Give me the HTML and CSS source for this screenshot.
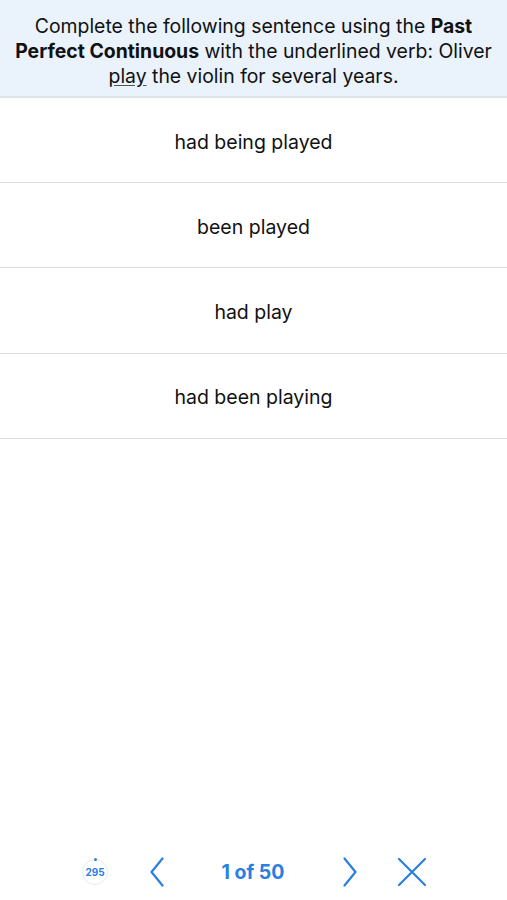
FILE: index.html
```html
<!DOCTYPE html>
<html>
<head>
<meta charset="utf-8">
<link rel="stylesheet" href="styles.css">
</head>
<body>
<div class="app">
  <div class="question">Complete the following sentence using the <b>Past</b><br><b>Perfect Continuous</b> with the underlined verb: Oliver<br><u>play</u> the violin for several years.</div>
  <div class="options">
    <div class="option">had being played</div>
    <div class="option">been played</div>
    <div class="option">had play</div>
    <div class="option">had been playing</div>
  </div>
  <div class="spacer"></div>
  <div class="toolbar">
    <div class="counter">
      <span class="dot"></span>
      <span class="num">295</span>
    </div>
    <svg class="prev" width="22" height="30" viewBox="0 0 22 30"><path d="M15.5 1.5 L4.5 15 L15.5 28.5" fill="none" stroke="#2b7fe0" stroke-width="2.2" stroke-linecap="round" stroke-linejoin="round"/></svg>
    <div class="page">1 of 50</div>
    <svg class="next" width="22" height="30" viewBox="0 0 22 30"><path d="M6.5 1.5 L17.5 15 L6.5 28.5" fill="none" stroke="#2b7fe0" stroke-width="2.2" stroke-linecap="round" stroke-linejoin="round"/></svg>
    <svg class="close" width="30" height="30" viewBox="0 0 30 30"><path d="M2 2 L28 28 M28 2 L2 28" fill="none" stroke="#2b7fe0" stroke-width="2.2" stroke-linecap="round"/></svg>
  </div>
</div>
</body>
</html>
```
FILE: styles.css
```css
html, body { margin: 0; padding: 0; background: #fff; }
body { font-family: Inter, "Noto Sans", "Liberation Sans", sans-serif; color: #111; }
.app { width: 507px; height: 900px; display: flex; flex-direction: column; }
.question {
  background: #eaf2fb;
  text-align: center;
  font-size: 19.4px;
  line-height: 25px;
  padding: 14px 0 7px;
  border-bottom: 2px solid #dfe3e8;
  white-space: nowrap;
}
.question b { font-weight: 700; }
.question u { text-decoration-color: #555; text-underline-offset: 2px; }
.options { display: flex; flex-direction: column; }
.option {
  height: 79.2px;
  padding-top: 5px;
  box-sizing: content-box;
  display: flex; align-items: center; justify-content: center;
  font-size: 19.5px;
  line-height: 1;
  border-bottom: 1.5px solid #dcdcdc;
}
.spacer { flex: 1; }
.toolbar {
  height: 40px;
  display: flex; align-items: center;
  padding-left: 82px;
  margin-bottom: 8px;
}
.counter {
  position: relative;
  width: 26px; height: 26px;
  box-sizing: border-box;
  border: 1.5px solid #e3ecf7;
  border-radius: 50%;
  display: flex; align-items: center; justify-content: center;
}
.counter .num { font-size: 10px; font-weight: 700; color: #2b7fe0; }
.counter .dot {
  position: absolute; top: -2px; left: 50%;
  width: 3px; height: 3px; margin-left: -1.5px;
  background: #2b7fe0; border-radius: 50%;
}
.prev { margin-left: 39px; }
.page { width: 100px; margin-left: 34px; text-align: center; font-size: 19.5px; font-weight: 700; color: #2b7fe0; }
.next { margin-left: 35px; }
.close { margin-left: 37px; }
```
